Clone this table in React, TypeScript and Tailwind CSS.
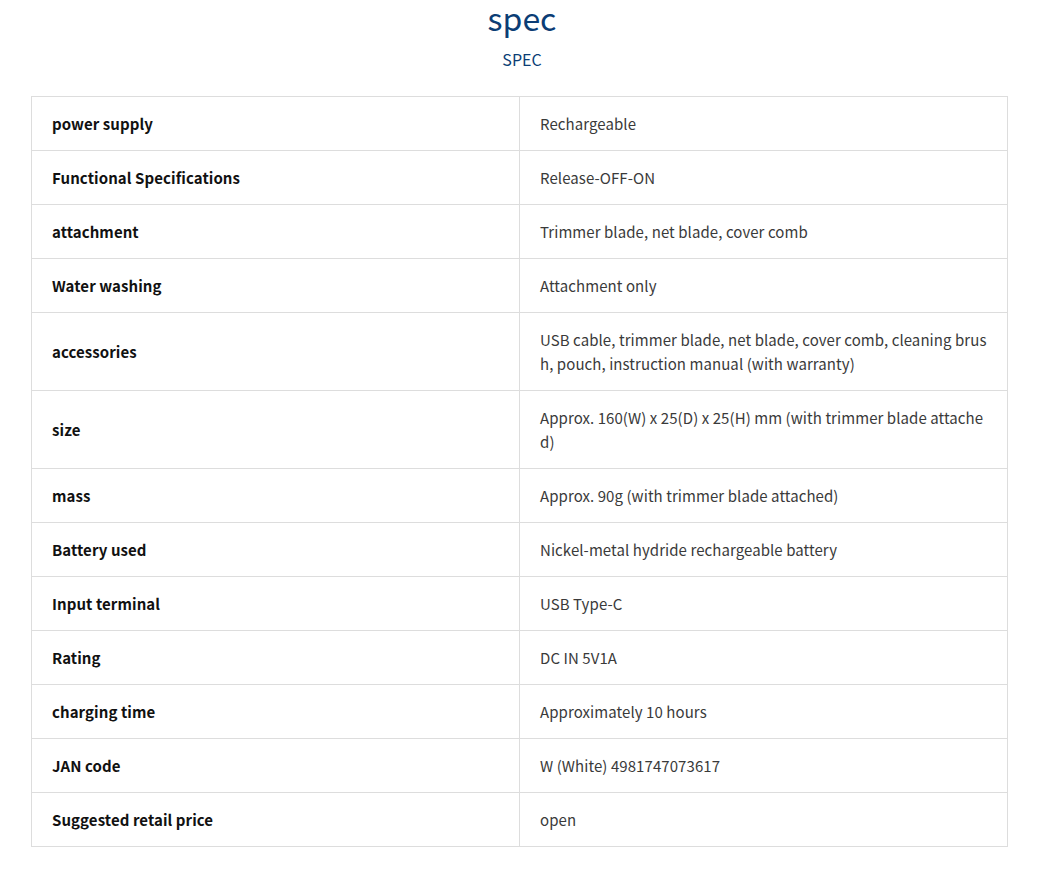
const specs: [string, string][] = [
  ['power supply', 'Rechargeable'],
  ['Functional Specifications', 'Release-OFF-ON'],
  ['attachment', 'Trimmer blade, net blade, cover comb'],
  ['Water washing', 'Attachment only'],
  ['accessories', 'USB cable, trimmer blade, net blade, cover comb, cleaning brush, pouch, instruction manual (with warranty)'],
  ['size', 'Approx. 160(W) x 25(D) x 25(H) mm (with trimmer blade attached)'],
  ['mass', 'Approx. 90g (with trimmer blade attached)'],
  ['Battery used', 'Nickel-metal hydride rechargeable battery'],
  ['Input terminal', 'USB Type-C'],
  ['Rating', 'DC IN 5V1A'],
  ['charging time', 'Approximately 10 hours'],
  ['JAN code', 'W (White) 4981747073617'],
  ['Suggested retail price', 'open'],
];

export default function App() {
  return (
    <div className="min-h-[878px] bg-white px-[31px] pb-8 font-['Noto_Sans_CJK_JP','Noto_Sans',sans-serif]">
      {/* Heading */}
      <div className="text-center text-[#0b3d75]">
        <h2 className="text-[32px] leading-[34px]">spec</h2>
        <p className="mt-[15px] text-[16px] leading-[20px]">SPEC</p>
      </div>

      {/* Spec table */}
      <table className="mt-[27px] w-[977px] border-collapse text-[15px] leading-[24px] tracking-[0.005em]">
        <tbody>
          {specs.map(([label, value]) => (
            <tr key={label}>
              <th className="w-1/2 border border-[#dddddd] px-5 py-[14.5px] text-left align-middle font-bold text-[#111111]">
                {label}
              </th>
              <td className="w-1/2 border border-[#dddddd] px-5 py-[14.5px] align-middle break-all text-[#3a3a3a]">
                {value}
              </td>
            </tr>
          ))}
        </tbody>
      </table>
    </div>
  );
}
